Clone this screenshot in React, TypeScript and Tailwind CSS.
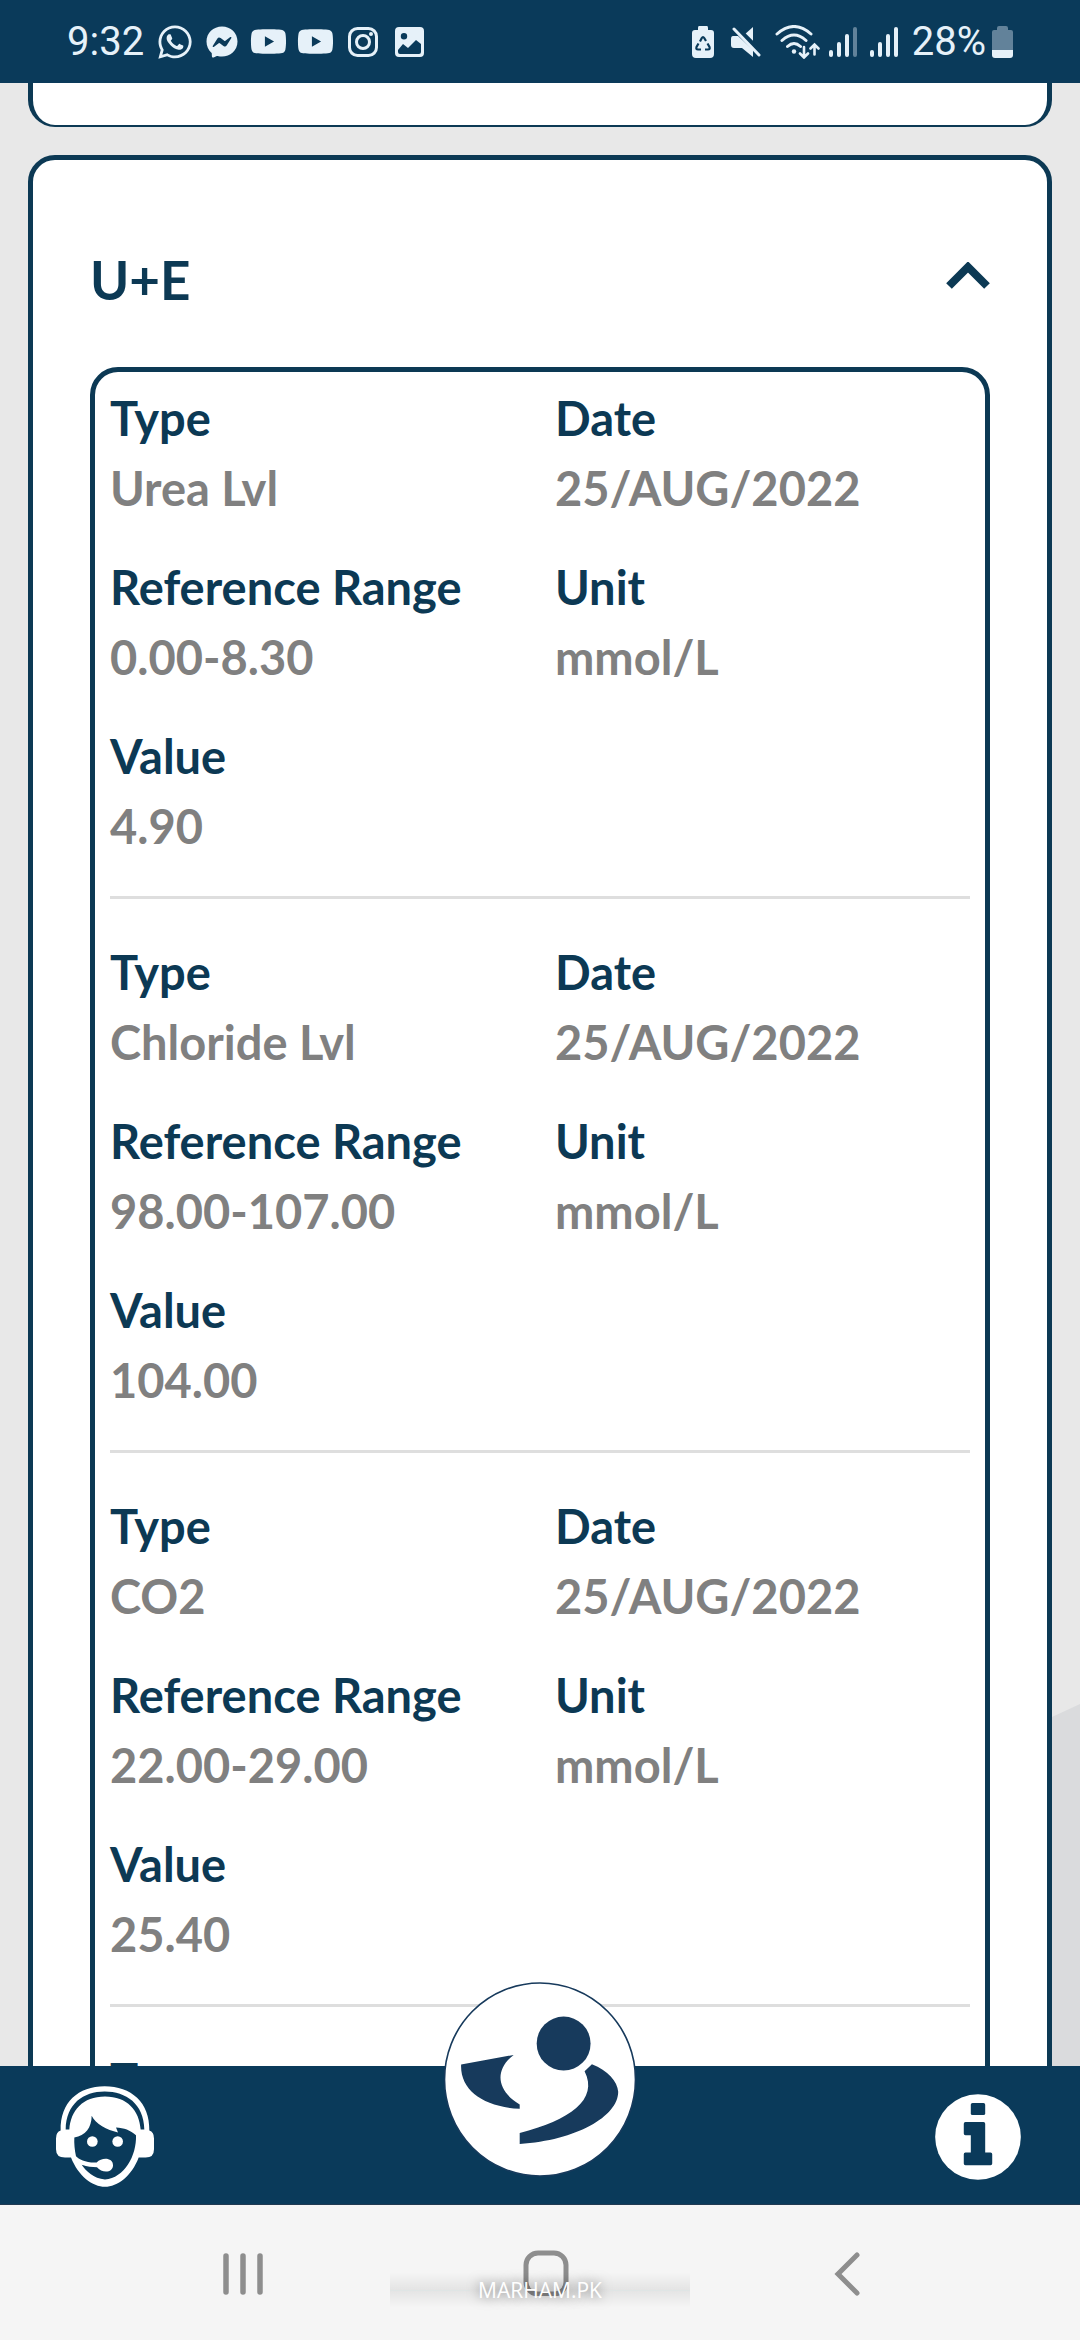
import React, { useState } from 'react';
import { FaWhatsapp, FaFacebookMessenger, FaYoutube } from 'react-icons/fa';

type LabRecord = { label: string; value: string }[];

const records: LabRecord[] = [
  [
    { label: 'Type', value: 'Urea Lvl' },
    { label: 'Date', value: '25/AUG/2022' },
    { label: 'Reference Range', value: '0.00-8.30' },
    { label: 'Unit', value: 'mmol/L' },
    { label: 'Value', value: '4.90' },
  ],
  [
    { label: 'Type', value: 'Chloride Lvl' },
    { label: 'Date', value: '25/AUG/2022' },
    { label: 'Reference Range', value: '98.00-107.00' },
    { label: 'Unit', value: 'mmol/L' },
    { label: 'Value', value: '104.00' },
  ],
  [
    { label: 'Type', value: 'CO2' },
    { label: 'Date', value: '25/AUG/2022' },
    { label: 'Reference Range', value: '22.00-29.00' },
    { label: 'Unit', value: 'mmol/L' },
    { label: 'Value', value: '25.40' },
  ],
  [{ label: 'Type', value: '' }],
];

const SignalIcon: React.FC<{ weak?: boolean }> = ({ weak }) => (
  <svg viewBox="0 0 28 30" className="h-[30px] w-7" fill="currentColor">
    <rect x="0" y="23" width="4" height="7" rx="2" />
    <rect x="8" y="15" width="4" height="15" rx="2" />
    <rect x="16" y="7" width="4" height="23" rx="2" />
    <rect x="24" y="0" width="4" height="30" rx="2" opacity={weak ? 0.4 : 1} />
  </svg>
);

const StatusBar: React.FC = () => (
  <header className="flex h-[83px] shrink-0 items-center justify-between bg-[#0a3a5a] px-[67px] font-[Roboto,sans-serif] text-[40px] leading-[40px] text-[#e6f1f9]">
    <div className="flex items-center">
      <span>9:32</span>
      <FaWhatsapp className="ml-3 h-[38px] w-[38px]" />
      <FaFacebookMessenger className="ml-3 h-8 w-8" />
      <FaYoutube className="ml-3 h-[37px] w-[37px]" />
      <FaYoutube className="ml-[10px] h-[37px] w-[37px]" />
      <svg viewBox="0 0 30 30" className="ml-[14px] h-[30px] w-[30px]" fill="none" stroke="currentColor" strokeWidth="3">
        <rect x="1.5" y="1.5" width="27" height="27" rx="8" />
        <circle cx="15" cy="15" r="6.5" />
        <circle cx="23" cy="7" r="2" fill="currentColor" stroke="none" />
      </svg>
      <svg viewBox="0 0 29 30" className="ml-[17px] h-[30px] w-[29px]">
        <path
          fill="currentColor"
          fillRule="evenodd"
          d="M4 0h21a4 4 0 0 1 4 4v22a4 4 0 0 1-4 4H4a4 4 0 0 1-4-4V4a4 4 0 0 1 4-4ZM9 6a3.2 3.2 0 1 0 0 6.4a3.2 3.2 0 0 0 0-6.4ZM3 23v2q0 2 2 2h19q2 0 2-2v-8l-5-4-8 8-5-4Z"
        />
      </svg>
    </div>
    <div className="flex items-center">
      <svg viewBox="0 0 22 32" className="h-8 w-[22px]">
        <path fill="currentColor" d="M7 0h8q1 0 1 2v2h3q3 0 3 3v21q0 4-4 4H4q-4 0-4-4V7q0-3 3-3h3V2q0-2 1-2Z" />
        <path
          d="M8 15.5 9.8 12q1.2-2 2.4 0l1.8 3M15.5 17.5l2 3.5q.8 2.5-1.5 2.5h-3M9 23.5H6q-2.3 0-1.5-2.5l2-3.5"
          fill="none"
          stroke="#0a3a5a"
          strokeWidth="2.2"
        />
      </svg>
      <svg viewBox="0 0 30 30" className="ml-[17px] h-[30px] w-[30px]">
        <path fill="currentColor" d="M22 0v17L13 8ZM2 9h5l15 14v7l-11-9H3q-3 0-3-3v-6q0-3 2-3Z" />
        <path d="M4 0 30 26" stroke="#0a3a5a" strokeWidth="6" />
        <path d="m3 2 25 26" stroke="currentColor" strokeWidth="3" strokeLinecap="round" />
      </svg>
      <svg viewBox="0 0 45 34" className="ml-[14px] h-[34px] w-[45px]" fill="none" stroke="currentColor" strokeWidth="3" strokeLinecap="round">
        <path d="M2 9q17-15 34 0M7 15.5q12-11 24 0M12.500 21.500q6.500-6 13 0" />
        <circle cx="19" cy="26.5" r="2.2" fill="currentColor" stroke="none" />
        <path d="M29 22v10m-4-3.5 4 4 4-4M39.5 29.5V20m-4 3.5 4-4 4 4" strokeWidth="2.6" />
      </svg>
      <span className="ml-[9px]">
        <SignalIcon weak />
      </span>
      <span className="ml-[13px]">
        <SignalIcon />
      </span>
      <span className="ml-[14px]">28%</span>
      <svg viewBox="0 0 21 32" className="ml-[6px] h-8 w-[21px]" fill="currentColor">
        <path opacity="0.4" d="M7 0h7q2 0 2 2v2h3q2 0 2 2v18H0V6q0-2 2-2h3V2q0-2 2-2Z" />
        <path d="M0 24h21v5q0 3-3 3H3q-3 0-3-3Z" />
      </svg>
    </div>
  </header>
);

const ResultRecord: React.FC<{ record: LabRecord }> = ({ record }) => (
  <dl className="mt-[38px] grid grid-cols-2 gap-x-[30px] gap-y-[29px] border-b-[3px] border-[#dedede] pb-[35px] text-[47px] leading-[70px] font-bold first:mt-[11px]">
    {record.map((field) => (
      <div key={field.label}>
        <dt className="text-[#0c3954]">{field.label}</dt>
        <dd className="h-[70px] text-[#808080]">{field.value}</dd>
      </div>
    ))}
  </dl>
);

const BottomBar: React.FC = () => (
  <nav className="relative flex h-[139px] shrink-0 items-center justify-between border-b border-[#213a52] bg-[#0a3a5a] pt-[3px] pl-14 pr-[59px]">
    <button aria-label="Support">
      <svg viewBox="168 317 294 302" className="h-[101px] w-[98px]">
        <path
          d="M182 450C180 365 235 317 314 317S450 365 448 450q14 4 14 24v32q0 25-25 25h-21C395 587 352 619 315 619S235 587 213 531h-18q-27 0-27-25v-32q0-20 14-24Z"
          fill="#fff"
        />
        <g fill="#0a3a5a">
          <path d="M197 447C198 370 250 333 314 333S432 370 433 447h-11C418 390 382 348 315 348S212 390 208 447Z" />
          <path d="M275 406C287 430 320 449 354 456l-6-15c24 1 43 8 60 23 2 62-35 128-93 133-34-2-58-26-70-44 18 6 30 7 46 7 14 18 48 18 48-6 0-23-33-25-49-8-30 2-54-10-62-19-4-18-6-38-5-56 33-4 52-30 52-65Z" />
        </g>
        <circle cx="277" cy="483" r="16" fill="#fff" />
        <circle cx="353" cy="483" r="16" fill="#fff" />
      </svg>
    </button>
    <button aria-label="Home" className="absolute bottom-[27px] left-1/2 -translate-x-1/2">
      <svg viewBox="131 126 580 586" className="h-[195px] w-[193px]">
        <ellipse cx="421" cy="419" rx="287" ry="290" fill="#fff" stroke="#173a5c" strokeWidth="5" />
        <g fill="#173a5c">
          <circle cx="492" cy="311" r="81" />
          <path d="M184 374 342 345C285 388 288 452 360 494V507C250 502 180 450 184 374Z" />
          <path d="M577 373 555 394C598 480 510 540 360 580V613C530 602 656 530 656 456 654 425 625 392 577 373Z" />
        </g>
      </svg>
    </button>
    <button aria-label="Information">
      <svg viewBox="225 345 257 257" className="h-[86px] w-[86px]">
        <circle cx="353.5" cy="473.5" r="128" fill="#fff" />
        <g fill="#0a3a5a">
          <rect x="332" y="372" width="43" height="36" rx="5" />
          <path d="M316 429h54q5 0 5 5v86h16q5 0 5 5v28q0 5-5 5h-75q-5 0-5-5v-28q0-5 5-5h16v-52h-16q-5 0-5-5v-29q0-5 5-5Z" />
        </g>
      </svg>
    </button>
  </nav>
);

const SystemNav: React.FC = () => (
  <div className="relative grid h-[135px] shrink-0 grid-cols-[1fr_auto_1fr] items-center bg-[#f5f5f5] px-[220px] text-[#8e8e8e]">
    <button aria-label="Recent apps" className="justify-self-start">
      <svg viewBox="0 0 46 46" className="h-[46px] w-[46px]" fill="none" stroke="currentColor" strokeWidth="5.5" strokeLinecap="round">
        <path d="M6 6v36M23 6v36M40 6v36" />
      </svg>
    </button>
    <button aria-label="Home screen">
      <svg viewBox="0 0 46 46" className="ml-3 h-[46px] w-[46px]" fill="none" stroke="currentColor" strokeWidth="5">
        <rect x="3" y="3" width="40" height="41" rx="12" />
      </svg>
    </button>
    <button aria-label="Back" className="justify-self-end">
      <svg viewBox="0 0 26 46" className="h-[46px] w-[26px]" fill="none" stroke="currentColor" strokeWidth="5" strokeLinecap="round">
        <path d="M23 5 4 24 23 43" />
      </svg>
    </button>
    <div className="absolute bottom-8 left-1/2 flex h-9 w-[300px] -translate-x-1/2 items-center gap-2 bg-linear-to-b from-black/0 via-black/7 to-black/0">
      <span className="h-px flex-1 bg-[#dfe5e5]" />
      <span className="font-['Open_Sans',sans-serif] text-[21px] leading-9 text-white [text-shadow:0_0_12px_rgba(0,0,0,0.5)]">MARHAM.PK</span>
      <span className="h-px flex-1 bg-[#dfe5e5]" />
    </div>
  </div>
);

const App: React.FC = () => {
  const [isOpen, setIsOpen] = useState(true);

  return (
    <div className="flex h-screen flex-col bg-[#e8e8e8] font-[Lato,sans-serif]">
      <StatusBar />

      <main className="relative min-h-0 flex-1 overflow-hidden px-7">
        {/* Background shape */}
        <svg viewBox="0 0 28 362" className="absolute right-0 bottom-0 h-[362px] w-7">
          <path d="M0 13 28 0V362H0Z" fill="#dadbdd" />
        </svg>

        {/* End of the previous panel */}
        <section className="h-11 rounded-b-[27px] border-x-[5px] border-b-2 border-[#0c3954] bg-white" />

        <section className="mt-7 rounded-[27px] border-[5px] border-[#0c3954] bg-white px-[57px] pb-[57px]">
          <button
            onClick={() => setIsOpen(!isOpen)}
            aria-expanded={isOpen}
            className="flex w-full items-center justify-between pt-20 pb-[47px] text-[#0c3954]"
          >
            <span className="text-[53px] leading-[80px] font-bold">U+E</span>
            <svg viewBox="0 0 44 36" className={`h-9 w-11 ${isOpen ? '' : 'rotate-180'}`} fill="none" stroke="currentColor" strokeWidth="8">
              <path d="M3 24 22 5 41 24" />
            </svg>
          </button>

          {isOpen && (
            <div className="rounded-[28px] border-[5px] border-[#0c3954] px-[15px]">
              {records.map((record, idx) => (
                <ResultRecord key={idx} record={record} />
              ))}
            </div>
          )}
        </section>
      </main>

      <BottomBar />
      <SystemNav />
    </div>
  );
};

export default App;
